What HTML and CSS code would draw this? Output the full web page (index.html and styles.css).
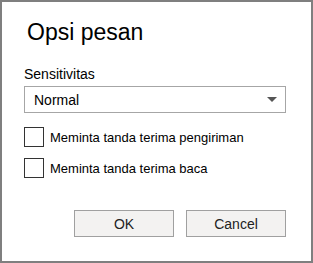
FILE: index.html
```html
<!DOCTYPE html>
<html>
<head>
  <title>Opsi pesan</title>
  <link rel="stylesheet" href="styles.css">
</head>
<body>
  <div class="dialog">
    <h1 class="title">Opsi pesan</h1>

    <div class="field">
      <label class="field-label">Sensitivitas</label>
      <div class="dropdown">
        <span>Normal</span>
        <span class="caret"></span>
      </div>
    </div>

    <div class="checks">
      <div class="check-row">
        <span class="box"></span>
        <span>Meminta tanda terima pengiriman</span>
      </div>
      <div class="check-row">
        <span class="box"></span>
        <span>Meminta tanda terima baca</span>
      </div>
    </div>

    <div class="buttons">
      <button class="btn">OK</button>
      <button class="btn">Cancel</button>
    </div>
  </div>
</body>
</html>
```

FILE: styles.css
```css
body {
  margin: 0;
  padding: 0;
  background: #fff;
  color: #000;
  font-family: "Liberation Sans", Arial, sans-serif;
}

.dialog {
  box-sizing: border-box;
  width: 313px;
  height: 263px;
  border: 2px solid #7f7f7f;
  padding: 0 25px 0 22px;
  display: flex;
  flex-direction: column;
}

.title {
  margin: 15px 0 0 3px;
  font-size: 23px;
  font-weight: normal;
  line-height: 31px;
}

.field {
  margin-top: 18px;
}

.field-label {
  display: block;
  font-size: 14px;
  line-height: 16px;
}

.dropdown {
  box-sizing: border-box;
  margin-top: 4px;
  height: 27px;
  border: 1px solid #a6a6a6;
  display: flex;
  align-items: center;
  justify-content: space-between;
  padding: 0 8px 0 9px;
  font-size: 14px;
}

.caret {
  width: 0;
  height: 0;
  border-left: 5px solid transparent;
  border-right: 5px solid transparent;
  border-top: 5px solid #555;
}

.checks {
  margin-top: 14px;
  display: flex;
  flex-direction: column;
  gap: 11px;
}

.check-row {
  display: flex;
  align-items: center;
  gap: 6px;
  font-size: 13px;
}

.box {
  box-sizing: border-box;
  width: 20px;
  height: 20px;
  border: 1px solid #333;
}

.buttons {
  margin-top: 32px;
  display: flex;
  justify-content: flex-end;
  gap: 12px;
}

.btn {
  box-sizing: border-box;
  width: 100px;
  height: 27px;
  background: #f3f2f1;
  border: 1px solid #a0a0a0;
  font-family: "Liberation Sans", Arial, sans-serif;
  font-size: 14px;
  color: #222;
  padding: 0;
}
```
